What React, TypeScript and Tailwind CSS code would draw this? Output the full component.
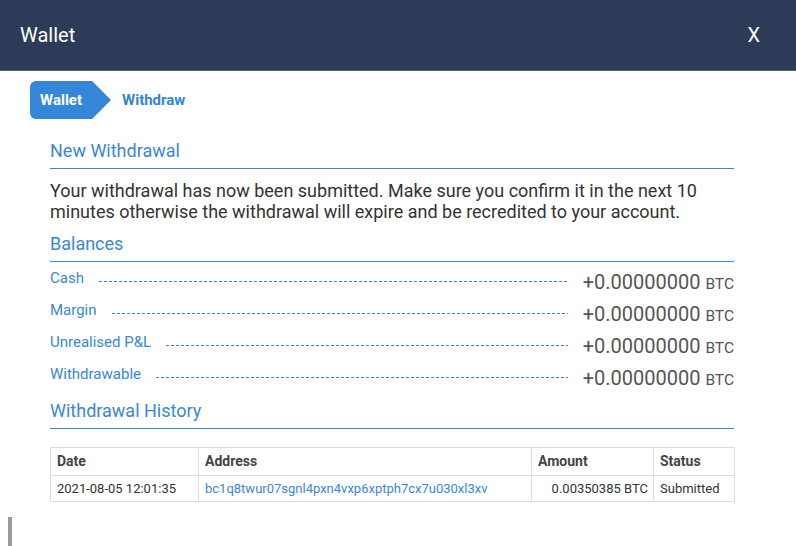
const balances = [
  { label: "Cash", value: "+0.00000000" },
  { label: "Margin", value: "+0.00000000" },
  { label: "Unrealised P&L", value: "+0.00000000" },
  { label: "Withdrawable", value: "+0.00000000" },
];

function SectionTitle({ children }: { children: React.ReactNode }) {
  return (
    <h2 className="border-b border-[#3a87d9] pb-[5px] text-[18px] leading-[24px] font-normal text-[#3a87d9]">
      {children}
    </h2>
  );
}

export default function App() {
  return (
    <div className="relative h-[546px] w-[796px] overflow-hidden bg-white font-['Roboto',sans-serif] text-[#333]">
      <header className="flex h-[71px] items-center justify-between border-b border-[#58647c] bg-[#2e3b58] pl-5 pr-[36px]">
        <h1 className="text-[20px] leading-[28px] font-normal text-white">Wallet</h1>
        <button className="text-[20px] leading-[28px] text-white">X</button>
      </header>

      <nav className="ml-[30px] mt-[10px] flex h-[38px] items-center">
        <div className="flex items-center">
          <span className="flex h-[38px] items-center rounded-l-[6px] bg-[#3585d8] pl-[10px] pr-[10px] text-[15px] font-bold text-white">
            Wallet
          </span>
          <span className="h-0 w-0 border-y-[19px] border-l-[19px] border-y-transparent border-l-[#3585d8]" />
        </div>
        <span className="ml-[11px] text-[15px] font-bold text-[#3585d8]">Withdraw</span>
      </nav>

      <main className="pl-[50px] pr-[62px]">
        <section className="mt-[20px]">
          <SectionTitle>New Withdrawal</SectionTitle>
          <p className="mt-[11px] text-[18px] leading-[21px] text-[#333]">
            Your withdrawal has now been submitted. Make sure you confirm it in the next 10 minutes otherwise the
            withdrawal will expire and be recredited to your account.
          </p>
        </section>

        <section className="mt-[10px]">
          <SectionTitle>Balances</SectionTitle>
          <div className="mt-[6px]">
            {balances.map((b) => (
              <div key={b.label} className="flex h-[32px] items-start">
                <span className="text-[15px] leading-[20px] text-[#3a87d9]">{b.label}</span>
                <span className="mx-[15px] mt-[13px] h-px flex-1 bg-[linear-gradient(to_right,#3a87d9_3px,transparent_3px)] bg-[length:5px_1px] bg-repeat-x" />
                <span className="mt-[2px] text-[20px] leading-[24px] text-[#555]">
                  {b.value} <span className="text-[15.5px]">BTC</span>
                </span>
              </div>
            ))}
          </div>
        </section>

        <section className="mt-[3px]">
          <SectionTitle>Withdrawal History</SectionTitle>
          <table className="mt-[18px] w-full table-fixed border-collapse text-left">
            <thead>
              <tr className="h-[28px]">
                <th className="w-[148px] border border-[#ddd] px-[6px] py-0 text-[14px] font-bold text-[#444]">Date</th>
                <th className="w-[333px] border border-[#ddd] px-[6px] py-0 text-[14px] font-bold text-[#444]">Address</th>
                <th className="w-[122px] border border-[#ddd] px-[6px] py-0 text-[14px] font-bold text-[#444]">Amount</th>
                <th className="w-[81px] border border-[#ddd] px-[6px] py-0 text-[14px] font-bold text-[#444]">Status</th>
              </tr>
            </thead>
            <tbody>
              <tr className="h-[26px] text-[13px]">
                <td className="border border-[#ddd] px-[6px] py-0 text-[#333]">2021-08-05 12:01:35</td>
                <td className="border border-[#ddd] px-[6px] py-0 text-[#3a87d9]">
                  bc1q8twur07sgnl4pxn4vxp6xptph7cx7u030xl3xv
                </td>
                <td className="border border-[#ddd] pl-[6px] pr-[5px] py-0 text-right text-[#333]">0.00350385 BTC</td>
                <td className="border border-[#ddd] px-[6px] py-0 text-[#333]">Submitted</td>
              </tr>
            </tbody>
          </table>
        </section>
      </main>

      <div className="absolute bottom-0 left-[8px] h-[29px] w-[4px] bg-[#9a9ca2]" />
    </div>
  );
}
